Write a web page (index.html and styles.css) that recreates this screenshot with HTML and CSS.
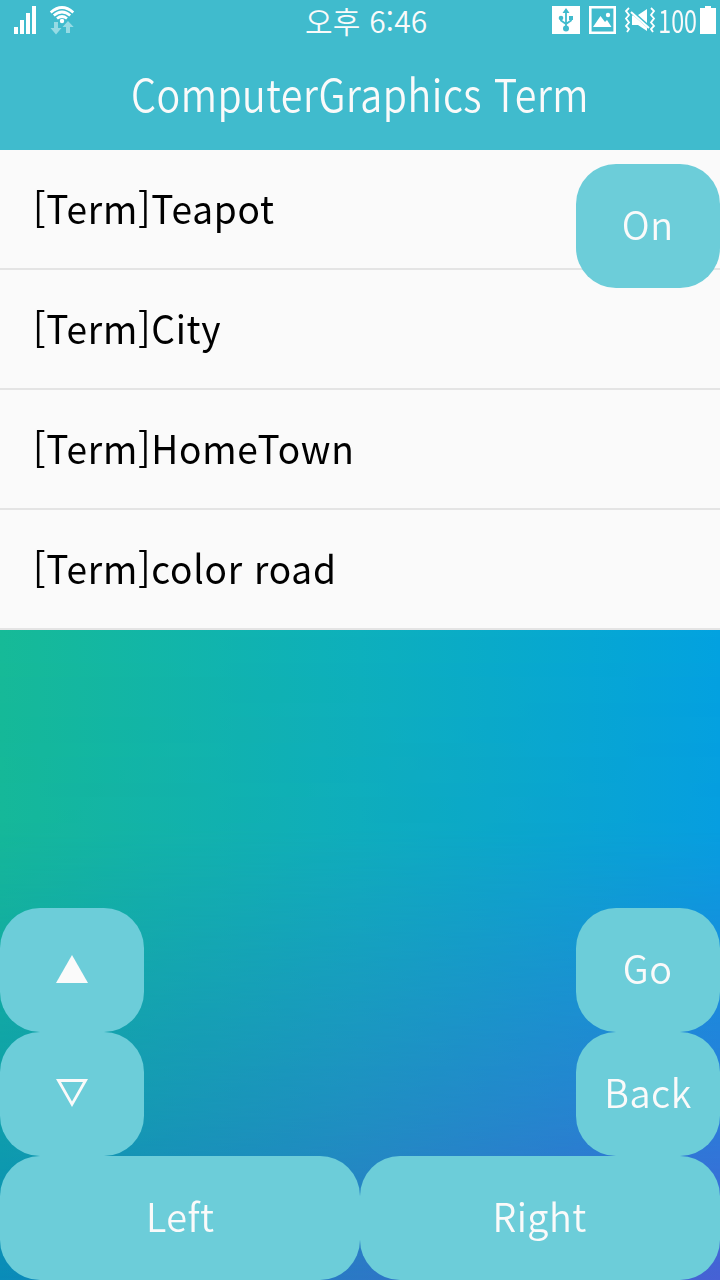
FILE: index.html
```html
<!DOCTYPE html>
<html lang="ko">
<head>
<meta charset="utf-8">
<title>ComputerGraphics Term</title>
<link rel="stylesheet" href="styles.css">
</head>
<body>
<div class="screen">
  <header class="header">
    <div class="status">
      <svg class="status-left" width="90" height="40" viewBox="0 0 90 40">
        <path fill="#fff" d="M14 27h4v7h-4zM20 20h4v14h-4zM26 13h4v21h-4zM32 6h4v28h-4z"/>
        <g fill="none" stroke="#fff" stroke-width="2.700">
          <path d="M50.700 12.500Q62 2.500 73.300 12.500"/>
          <path d="M53.800 15.500Q62 8.500 70.200 15.500"/>
          <path d="M57 18.500Q62 14.500 67 18.500"/>
        </g>
        <circle cx="62" cy="21" r="2.200" fill="#fff"/>
        <path fill="#96dbe4" d="M54 22h4v6h3.500L56 34.500 50.500 28H54zM66 33h4v-6h3.700L68 21l-5.500 6H66z"/>
      </svg>
      <span class="clock">오후 6:46</span>
      <div class="status-right">
        <svg width="106" height="40" viewBox="550 0 106 40">
          <path fill="#fff" d="M552 6h28v28h-28z"/>
          <g fill="none" stroke="#40bbcd" stroke-width="1.800">
            <path d="M566 11v18M561 18v2.500l5 3.500M571 19v1.500l-5 3.500"/>
          </g>
          <path fill="#40bbcd" d="M566 8l3.500 5h-7zM569 16h4v4h-4z"/>
          <circle cx="561" cy="18" r="2.300" fill="#40bbcd"/>
          <circle cx="566" cy="28.500" r="3" fill="#40bbcd"/>
          <path fill="none" stroke="#fff" stroke-width="2.600" d="M590.300 7.300h24.400v25.400h-24.400z"/>
          <path fill="#fff" d="M593 27l7.500-11 4.500 6 2-2 4.500 7z"/>
          <circle cx="608" cy="15" r="2.200" fill="#fff"/>
          <g fill="none" stroke="#fff" stroke-width="1.800">
            <path d="M629 8l-3 3 3 4-3 3.500 3 4-3 3.500 3 3-2 3"/>
            <path d="M651 8l3 3-3 4 3 3.500-3 4 3 3.500-3 3 2 3"/>
            <path stroke-width="2" d="M631 12l18 16"/>
          </g>
          <path fill="#fff" d="M638 15l9-6v14zM632 15.500h1.500L647 27.500V31l-9-6h-6z"/>
        </svg>
        <span class="level">100</span>
        <svg class="battery" width="16" height="28" viewBox="0 0 16 28"><path fill="#fff" d="M5 0h6v2h5v26H0V2h5z"/></svg>
      </div>
    </div>
    <h1 class="title">ComputerGraphics Term</h1>
  </header>
  <main class="stage">
    <ul class="list">
      <li class="item"><span>[Term]Teapot</span></li>
      <li class="item"><span>[Term]City</span></li>
      <li class="item"><span>[Term]HomeTown</span></li>
      <li class="item"><span>[Term]color road</span></li>
    </ul>
    <button class="btn toggle"><span>On</span></button>
    <div class="controls">
      <div class="column">
        <button class="btn"><svg width="32" height="30" viewBox="0 0 32 30"><path fill="#fafafa" d="M16 0l16 28H0z"/></svg></button>
        <button class="btn"><svg width="32" height="30" viewBox="0 0 32 30"><path fill="#fafafa" fill-rule="evenodd" d="M0 0h32L16 28zM5 3l11 19.500L27 3z"/></svg></button>
      </div>
      <div class="column">
        <button class="btn"><span>Go</span></button>
        <button class="btn"><span>Back</span></button>
      </div>
    </div>
    <div class="steer">
      <button class="btn wide"><span>Left</span></button>
      <button class="btn wide"><span>Right</span></button>
    </div>
  </main>
</div>
</body>
</html>
```
FILE: styles.css
```css
* { box-sizing: border-box; }
body {
  margin: 0;
  font-family: "Noto Sans CJK KR", "Noto Sans", sans-serif;
}
.screen {
  display: flex;
  flex-direction: column;
  width: 720px;
  height: 1280px;
  overflow: hidden;
}
.header {
  height: 150px;
  background: #40bbcd;
  color: #fafafa;
}
.status {
  display: grid;
  grid-template-columns: 305px 1fr auto;
  height: 40px;
}
.clock {
  font-size: 30px;
  font-weight: 350;
  line-height: 41px;
  letter-spacing: 0.2px;
  white-space: nowrap;
}
.status-right {
  display: flex;
  padding-right: 4px;
}
.level {
  width: 52px;
  margin-right: -8px;
  padding-left: 3px;
  font-size: 31px;
  font-weight: 400;
  line-height: 39px;
  transform: scaleX(.75);
  transform-origin: 0 50%;
}
.battery { margin-top: 6px; }
.title {
  margin: 0;
  height: 110px;
  font-size: 45px;
  font-weight: 350;
  line-height: 106px;
  text-align: center;
  white-space: nowrap;
  letter-spacing: 0.6px;
  transform: scaleX(.875);
}
.stage {
  position: relative;
  isolation: isolate;
  display: flex;
  flex-direction: column;
  height: 1130px;
  background: linear-gradient(90deg, #0a8cb9, #2c78c6 50%, #4761d5);
}
.stage::before {
  content: "";
  position: absolute;
  inset: 0;
  z-index: -1;
  background: linear-gradient(90deg, #16ba97, #0db0bc 50%, #02a2e0);
  mask-image: linear-gradient(#000 480px, rgba(0,0,0,.94) 680px, rgba(0,0,0,.4) 970px, transparent);
}
.list {
  margin: 0;
  padding: 0;
  list-style: none;
}
.item {
  height: 120px;
  padding-left: 33px;
  border-bottom: 2px solid #e4e4e4;
  background: #fafafa;
  color: #000;
  font-size: 39px;
  line-height: 115px;
  letter-spacing: 0.8px;
}
.item span {
  display: inline-block;
  transform: scaleX(.95);
  transform-origin: 0 50%;
}
.btn {
  display: flex;
  align-items: center;
  justify-content: center;
  width: 144px;
  height: 124px;
  padding: 0;
  border: 0;
  border-radius: 40px;
  background: #6ccdd9;
  color: #fafafa;
  font-family: inherit;
  font-size: 39px;
  font-weight: 350;
  letter-spacing: 0.5px;
}
.btn span {
  padding-bottom: 7px;
  transform: scaleX(.97);
}
.toggle {
  position: absolute;
  top: 14px;
  right: 0;
}
.controls {
  display: flex;
  justify-content: space-between;
  margin-top: auto;
}
.steer { display: flex; }
.wide { width: 360px; }
```
